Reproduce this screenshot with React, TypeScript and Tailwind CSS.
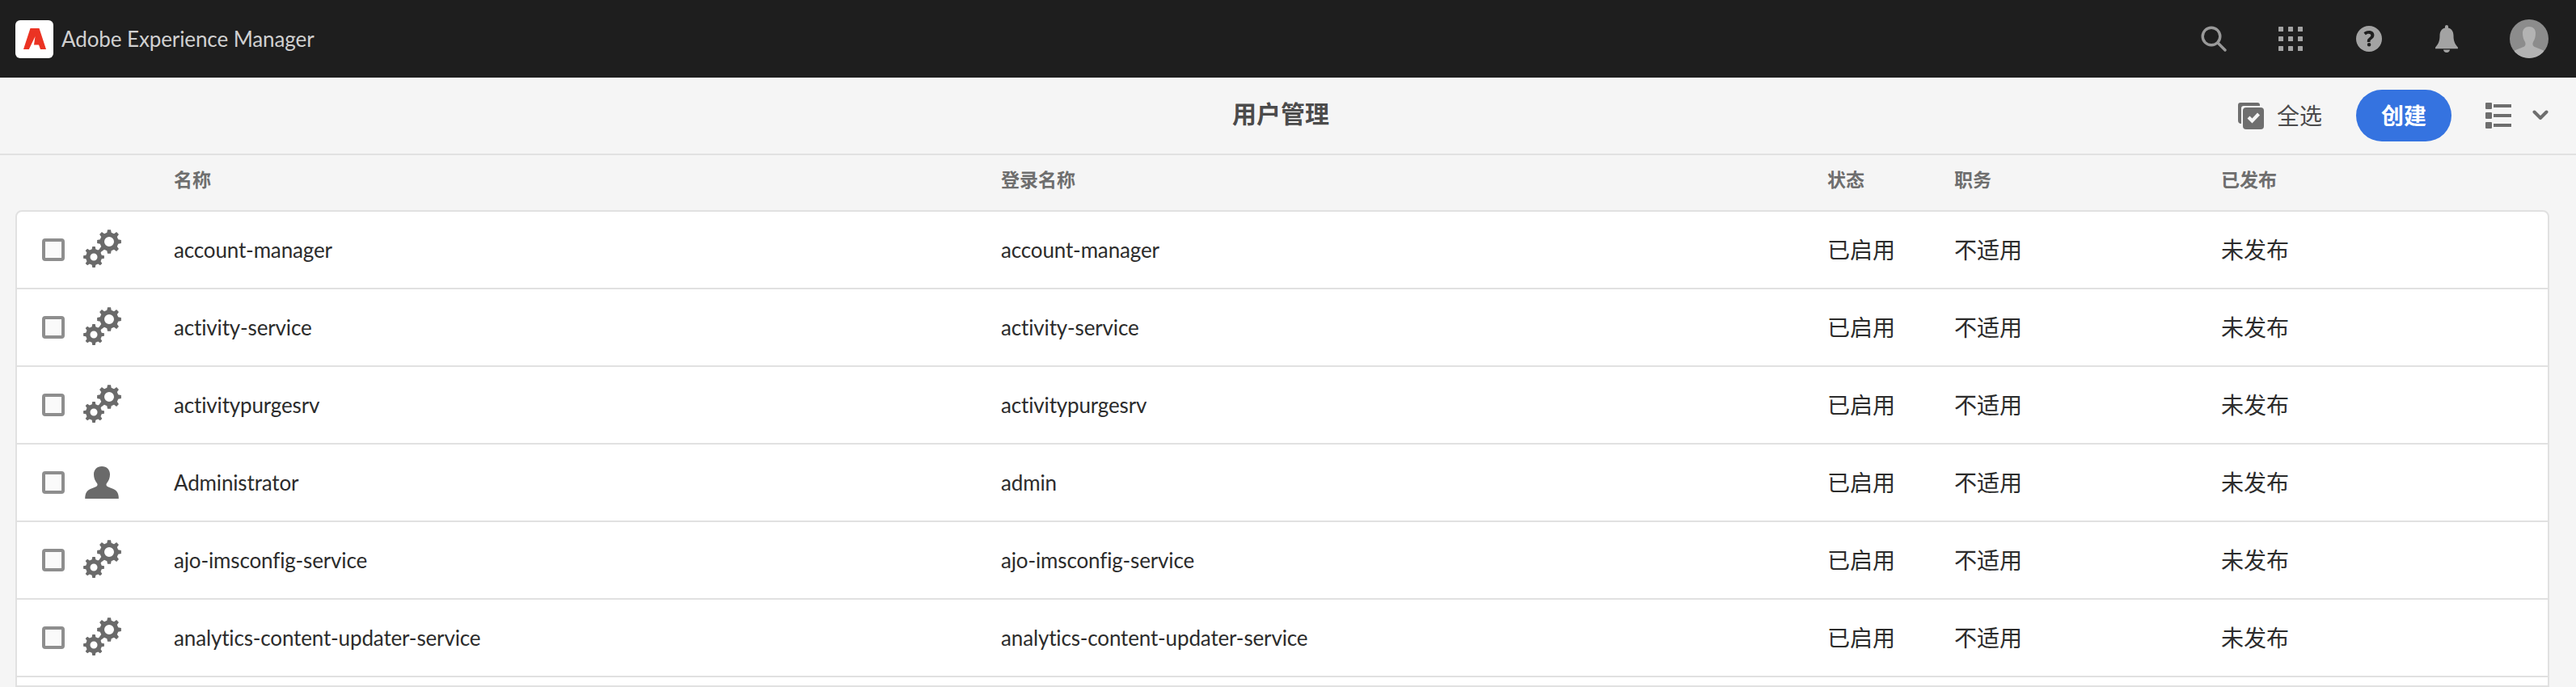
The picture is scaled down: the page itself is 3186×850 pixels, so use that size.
import { Fragment } from 'react';

type User = { name: string; login: string; kind: 'service' | 'user' };

const users: User[] = [
    { name: 'account-manager', login: 'account-manager', kind: 'service' },
    { name: 'activity-service', login: 'activity-service', kind: 'service' },
    { name: 'activitypurgesrv', login: 'activitypurgesrv', kind: 'service' },
    { name: 'Administrator', login: 'admin', kind: 'user' },
    { name: 'ajo-imsconfig-service', login: 'ajo-imsconfig-service', kind: 'service' },
    { name: 'analytics-content-updater-service', login: 'analytics-content-updater-service', kind: 'service' },
];

// builds a cog outline around (cx, cy)
function gearPath(cx: number, cy: number, outer: number, inner: number, hole: number, teeth: number) {
    const step = (Math.PI * 2) / teeth;
    let d = '';
    for (let i = 0; i < teeth; i++) {
        const a = i * step - Math.PI / 2;
        const pts = [
            [inner, a - step * 0.3],
            [outer, a - step * 0.17],
            [outer, a + step * 0.17],
            [inner, a + step * 0.3],
        ];
        for (const [r, t] of pts) {
            d += `${d ? 'L' : 'M'}${(cx + r * Math.cos(t)).toFixed(2)} ${(cy + r * Math.sin(t)).toFixed(2)}`;
        }
    }
    d += `Z M${cx - hole} ${cy}a${hole} ${hole} 0 1 0 ${hole * 2} 0a${hole} ${hole} 0 1 0 ${-hole * 2} 0Z`;
    return d;
}

function GearsIcon() {
    return (
        <svg width="48" height="48" viewBox="0 0 48 48" className="-mt-[2px] text-[#6a6a6a]" fill="currentColor">
            <path fillRule="evenodd" d={gearPath(32, 15, 15, 11.5, 6, 8)} />
            <path fillRule="evenodd" d={gearPath(13, 34, 13, 10, 4.5, 8)} />
        </svg>
    );
}

function PersonIcon() {
    return (
        <svg width="48" height="48" viewBox="0 0 48 48" className="text-[#6a6a6a]" fill="currentColor">
            <path d="M23 4c-6 0-10 4-10 10 0 4 1.500 8 4 11 1 1.300.7 3-1 4-4 2-11 3-13 9-.7 2-.8 4-.8 6h41.600c0-2-.1-4-.8-6-2-6-9-7-13-9-1.700-1-2-2.700-1-4 2.500-3 4-7 4-11 0-6-4-10-10-10Z" />
        </svg>
    );
}

function AdobeLogo() {
    return (
        <div className="w-[47px] h-[47px] rounded-[6px] bg-white flex items-center justify-center">
            <svg width="28" height="26" viewBox="0 0 28 26">
                <path fill="#eb3323" d="M8.500 0H19.500L28 26H21L19 20.500H13L14.500 10L6.800 26H0Z" />
            </svg>
        </div>
    );
}

function TopIcons() {
    return (
        <div className="flex items-center text-[#a3a3a3]">
            <svg width="32" height="32" viewBox="0 0 32 32" fill="none" stroke="currentColor" strokeWidth="3.400" strokeLinecap="round" className="text-[#999999]">
                <circle cx="13" cy="13" r="10.800" />
                <path d="M21 21l9 9" />
            </svg>
            <svg width="30" height="30" viewBox="0 0 30 30" fill="currentColor" className="ml-[64px]">
                {[0, 12, 24].map(y => (
                    <Fragment key={y}>
                        {[0, 12, 24].map(x => (
                            <rect key={x} x={x} y={y} width="6" height="6" rx="0.500" />
                        ))}
                    </Fragment>
                ))}
            </svg>
            <svg width="32" height="32" viewBox="0 0 32 32" className="ml-[66px]">
                <circle cx="16" cy="16" r="16" fill="currentColor" />
                <path fill="#1e1e1e" d="M16 6c-3 0-5.300 1.200-6.500 2.500l2.300 2.700c1-.9 2.300-1.500 3.800-1.500 1.700 0 2.700.8 2.700 2 0 1.300-1 2-2.200 3-1.500 1.200-2.300 2.300-2.300 4.300v1h3.700v-.7c0-1.200.6-1.800 1.900-2.800 1.600-1.300 3-2.600 3-5C22.400 8.200 19.900 6 16 6Zm-2.200 17.300a2.300 2.300 0 1 0 4.600 0 2.300 2.300 0 1 0-4.600 0Z" />
            </svg>
            <svg width="28" height="34" viewBox="0 0 28 34" fill="currentColor" className="ml-[66px]">
                <path d="M14 0c-1.200 0-2 .9-2 2v1.400C7.500 4.500 5.500 8.300 5.500 13c0 6-1.300 10-5 14-.5.600-.5 1.500-.5 2.200h28c0-.7 0-1.600-.5-2.200-3.700-4-5-8-5-14 0-4.700-2-8.500-6.500-9.600V2c0-1.100-.8-2-2-2Z" />
                <path d="M10 30.500h8c0 1.800-1.800 3.500-4 3.500s-4-1.700-4-3.500Z" />
            </svg>
            <div className="ml-[64px] w-[48px] h-[48px] rounded-full bg-[#8c8c8c] overflow-hidden">
                <svg width="48" height="48" viewBox="0 0 48 48" fill="#b3b3b3">
                    <path d="M24 9c-5 0-8 3-8 8 0 4 1 8 3 11 .8 1.500.8 4-.7 5.300-2 1.700-10 3.500-13 6 4 5 11 8.700 18.700 8.700s14.700-3.700 18.700-8.700c-3-2.500-11-4.300-13-6-1.500-1.300-1.500-3.800-.7-5.300 2-3 3-7 3-11 0-5-3-8-8-8Z" />
                </svg>
            </div>
        </div>
    );
}

function Toolbar() {
    return (
        <div className="h-[96px] shrink-0 grid grid-cols-[1fr_auto_1fr] items-center pl-[16px] pr-[34px] border-b-2 border-[#e1e1e1]">
            <span />
            <h1 className="pb-[6px] text-[30px] font-bold text-[#4b4b4b]">用户管理</h1>
            <div className="flex items-center justify-end">
                <svg width="32" height="33" viewBox="0 0 32 33" fill="#6e6e6e">
                    <path d="M3 0h21a3 3 0 0 1 3 3v1H7a3 3 0 0 0-3 3v19a4 4 0 0 1-4-4V3a3 3 0 0 1 3-3Z" />
                    <rect x="6" y="6" width="26" height="27" rx="4" />
                    <path d="M11.500 19.500l3-3 3 3 6.500-7 3 3-9.500 10Z" fill="#f5f5f5" />
                </svg>
                <span className="ml-[16px] text-[28px] text-[#4b4b4b]">全选</span>
                <button className="ml-[42px] w-[118px] h-[64px] rounded-full bg-[#3573e0] text-white text-[28px] font-bold">创建</button>
                <svg width="32" height="32" viewBox="0 0 32 32" fill="#6e6e6e" className="ml-[42px]">
                    <rect x="0" y="0" width="8" height="8" rx="1" />
                    <rect x="0" y="12" width="8" height="8" rx="1" />
                    <rect x="0" y="24" width="8" height="8" rx="1" />
                    <rect x="10" y="2" width="22" height="4" />
                    <rect x="10" y="14" width="22" height="4" />
                    <rect x="10" y="26" width="22" height="4" />
                </svg>
                <svg width="20" height="14" viewBox="0 0 20 14" fill="none" stroke="#6e6e6e" strokeWidth="4" strokeLinecap="round" strokeLinejoin="round" className="ml-[26px]">
                    <path d="M2.500 2.500L10 10l7.500-7.500" />
                </svg>
            </div>
        </div>
    );
}

const columns = 'grid grid-cols-[196px_1023px_1022px_157px_330px_1fr] items-center';

export default function App() {
    return (
        <div className="h-screen overflow-hidden flex flex-col bg-[#f5f5f5] font-['Lato','Noto_Sans_CJK_SC',sans-serif]">
            <header className="h-[96px] shrink-0 bg-[#1e1e1e] flex items-center justify-between pl-[19px] pr-[34px]">
                <div className="flex items-center gap-[10px]">
                    <AdobeLogo />
                    <span className="text-[26px] tracking-[-0.1px] text-[#d0d0d0]">Adobe Experience Manager</span>
                </div>
                <TopIcons />
            </header>

            <Toolbar />

            <div className={`${columns} h-[68px] shrink-0 pl-[19px] pb-[8px] text-[23px] font-bold text-[#6e6e6e]`}>
                <span />
                <span>名称</span>
                <span>登录名称</span>
                <span>状态</span>
                <span>职务</span>
                <span>已发布</span>
            </div>

            <div className="ml-[19px] mr-[33px] flex-1 bg-white border-2 border-[#e1e1e1] rounded-t-[8px]">
                {users.map(user => (
                    <div key={user.name} className={`${columns} h-[96px] border-b-2 border-[#e1e1e1] -ml-[2px] text-[28px] text-[#2c2c2c]`}>
                        <div className="flex items-center pl-[33px] gap-[23px]">
                            <span className="w-[28px] h-[28px] rounded-[4px] border-4 border-[#8e8e8e] bg-[#fafafa]" />
                            {user.kind === 'service' ? <GearsIcon /> : <PersonIcon />}
                        </div>
                        <span className="text-[26px] tracking-[-0.15px]">{user.name}</span>
                        <span className="text-[26px] tracking-[-0.15px]">{user.login}</span>
                        <span>已启用</span>
                        <span>不适用</span>
                        <span>未发布</span>
                    </div>
                ))}
            </div>
        </div>
    );
}
